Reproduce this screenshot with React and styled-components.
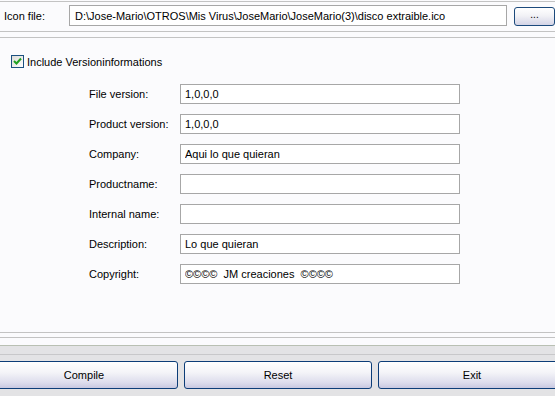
import styled, { createGlobalStyle } from "styled-components";

const Global = createGlobalStyle`
    html, body { margin: 0; padding: 0; background: #fbfbfd; }
    body { font-family: "Liberation Sans", Arial, sans-serif; font-size: 11px; color: #000; }
`

const fields = [
    { label: "File version:", value: "1,0,0,0" },
    { label: "Product version:", value: "1,0,0,0" },
    { label: "Company:", value: "Aqui lo que quieran" },
    { label: "Productname:", value: "" },
    { label: "Internal name:", value: "" },
    { label: "Description:", value: "Lo que quieran" },
    { label: "Copyright:", value: "©©©©  JM creaciones  ©©©©" },
]

const App = () => {
    return (
        <Window>
            <Global />
            <Header>
                <HeaderLabel>Icon file:</HeaderLabel>
                <PathInput readOnly value="D:\Jose-Mario\OTROS\Mis Virus\JoseMario\JoseMario(3)\disco extraible.ico" />
                <BrowseButton>...</BrowseButton>
            </Header>
            <Main>
                <CheckRow>
                    <CheckBox>
                        <svg width="9" height="9" viewBox="0 0 9 9">
                            <path d="M1 4 L3.5 6.5 L8 1.5" fill="none" stroke="#21a121" strokeWidth="2" />
                        </svg>
                    </CheckBox>
                    Include Versioninformations
                </CheckRow>
                <Fields>
                    {fields.map((f) => (
                        <FieldRow key={f.label}>
                            <FieldLabel>{f.label}</FieldLabel>
                            <FieldInput readOnly value={f.value} />
                        </FieldRow>
                    ))}
                </Fields>
            </Main>
            <Footer>
                <Buttons>
                    <ActionButton>Compile</ActionButton>
                    <ActionButton>Reset</ActionButton>
                    <ActionButton>Exit</ActionButton>
                </Buttons>
            </Footer>
        </Window>
    )
}

const Window = styled.div`
    width: 555px;
    height: 396px;
    overflow: hidden;
    display: flex;
    flex-direction: column;
    background: #fbfbfd;
`
const Header = styled.div`
    margin-top: 1px;
    border-top: 1px solid #c3c3c3;
    border-bottom: 1px solid #c3c3c3;
    height: 29px;
    display: flex;
    align-items: flex-start;
`
const HeaderLabel = styled.span`
    width: 69px;
    padding-left: 4px;
    box-sizing: border-box;
    line-height: 14px;
    margin-top: 7px;
`
const PathInput = styled.input`
    margin: 3px 0 0 0;
    width: 438px;
    height: 21px;
    box-sizing: border-box;
    border: 1px solid #a7a7a7;
    background: #fff;
    padding: 0 5px;
    font: inherit;
    color: #000;
    outline: none;
`
const BrowseButton = styled.button`
    margin: 5px 0 0 7px;
    width: 41px;
    height: 19px;
    border: 1px solid #1c4a7c;
    border-radius: 3px;
    background: linear-gradient(#ffffff, #f2f2f6 45%, #d4d4e6);
    font: inherit;
    font-size: 10px;
    line-height: 10px;
    padding: 0 0 3px 0;
    color: #000;
`
const Main = styled.div`
    margin-top: 5px;
    border-top: 1px solid #c3c3c3;
    border-bottom: 1px solid #c3c3c3;
    height: 296px;
    padding-top: 17px;
    box-sizing: border-box;
    display: flex;
    flex-direction: column;
    gap: 16px;
`
const CheckRow = styled.label`
    display: flex;
    align-items: center;
    gap: 3px;
    padding-left: 11px;
    height: 13px;
`
const CheckBox = styled.span`
    width: 13px;
    height: 13px;
    box-sizing: border-box;
    border: 1px solid #1c5180;
    background: linear-gradient(135deg, #dcdcd7, #ffffff);
    display: flex;
    align-items: center;
    justify-content: center;
`
const Fields = styled.div`
    display: flex;
    flex-direction: column;
    gap: 10px;
    padding-left: 89px;
`
const FieldRow = styled.div`
    display: flex;
    align-items: center;
    height: 20px;
`
const FieldLabel = styled.span`
    width: 91px;
`
const FieldInput = styled.input`
    width: 280px;
    height: 20px;
    box-sizing: border-box;
    border: 1px solid #a7a7a7;
    background: #fff;
    padding: 0 4px;
    margin: 0;
    font: inherit;
    color: #000;
    outline: none;
`
const Footer = styled.div`
    margin-top: 4px;
    border-top: 1px solid #c3c3c3;
    flex: 1;
    display: flex;
    flex-direction: column;
    background: #e3e3e5;
    &::before {
        content: "";
        display: block;
        height: 7px;
        border-bottom: 1px solid #b9c0b3;
        background: #fbfbfd;
    }
`
const Buttons = styled.div`
    border-top: 1px solid #c8c8ca;
    margin-top: 8px;
    padding-top: 6px;
    display: flex;
    gap: 6px;
    margin-left: -10px;
`
const ActionButton = styled.button`
    flex: 0 0 188px;
    height: 28px;
    border: 1px solid #0c3d78;
    border-radius: 3px;
    background: linear-gradient(#ffffff, #f4f4f8 40%, #dcdcec 80%, #c8c8e0);
    font: inherit;
    font-size: 11px;
    color: #000;
    padding: 0;
`

export default App
